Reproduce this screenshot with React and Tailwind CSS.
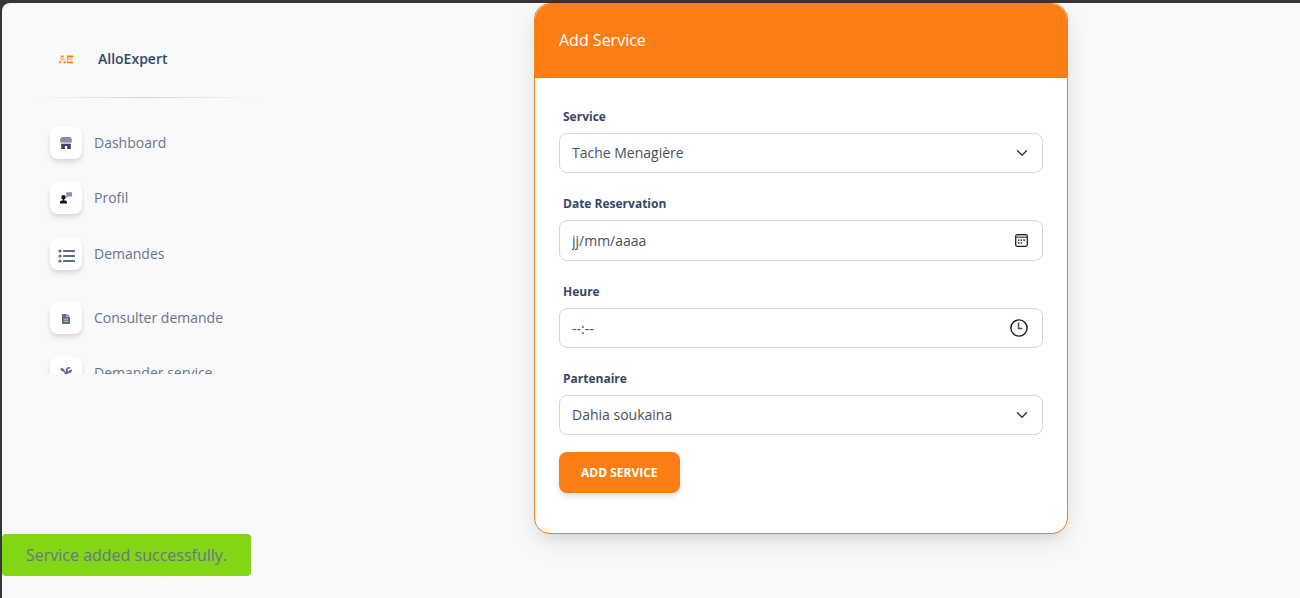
import React from "react";

function LogoMark() {
  return (
    <svg width="16" height="10" viewBox="0 0 16 10" fill="none" aria-hidden="true">
      <path d="M3 2.5H5.6" stroke="#fd7e14" strokeWidth="2" />
      <path d="M2.2 4.8H6.6" stroke="#fbb27c" strokeWidth="1.4" />
      <path d="M1.4 6.6H7.4" stroke="#fdd3b4" strokeWidth="1.4" />
      <path d="M1 8.3H3.2M5.6 8.3H7.8" stroke="#fd7e14" strokeWidth="1.8" />
      <path d="M9 2.5H15M9 8.3H15" stroke="#fd7e14" strokeWidth="1.8" />
      <path d="M9 5.4H14.4" stroke="#fbb27c" strokeWidth="1.4" />
      <path d="M9.4 2V9" stroke="#fd9a48" strokeWidth="1" />
    </svg>
  );
}

function ShopIcon() {
  return (
    <svg width="12" height="12" viewBox="0 0 12 12" aria-hidden="true">
      <path
        fill="#8a8fb0"
        d="M1.6 0H10.4L11.9 2.2V4.2A1.6 1.6 0 0 1 10.3 5.8Q9.5 5.8 8.9 5.2Q8.2 5.8 7.4 5.8Q6.6 5.8 6 5.2Q5.4 5.8 4.6 5.8Q3.8 5.8 3.1 5.2Q2.5 5.8 1.7 5.8A1.6 1.6 0 0 1 0.1 4.2V2.2Z"
      />
      <path
        fill="#3a416f"
        d="M1.2 6.7Q2.3 7 3.1 6.4Q4.6 7.2 6 6.4Q7.4 7.2 8.9 6.4Q9.7 7 10.8 6.7V12H7.2V9H4.9V12H1.2Z"
      />
    </svg>
  );
}

function ProfileIcon() {
  return (
    <svg width="12" height="12" viewBox="0 0 12 12" aria-hidden="true">
      <path fill="#8a8fb0" d="M6.3 0.2H12V4.6H8.3L6.3 6Z" />
      <circle cx="3.5" cy="5.2" r="2.2" fill="#141727" />
      <path fill="#141727" d="M2.8 7H4.2V8.4H5.4Q7 8.7 7 10.2V11.6H0V10.2Q0 8.7 1.6 8.4H2.8Z" />
    </svg>
  );
}

function ListIcon() {
  return (
    <svg width="17" height="14" viewBox="0 0 17 14" aria-hidden="true" className="translate-y-0.5">
      <g fill="#5b6b8a">
        <circle cx="2" cy="2" r="1.6" />
        <circle cx="2" cy="7" r="1.6" />
        <circle cx="2" cy="12" r="1.6" />
        <rect x="5" y="1" width="12" height="2" rx="0.6" />
        <rect x="5" y="6" width="12" height="2" rx="0.6" />
        <rect x="5" y="11" width="12" height="2" rx="0.6" />
      </g>
    </svg>
  );
}

function FileIcon() {
  return (
    <svg width="8" height="12" viewBox="0 0 8 12" aria-hidden="true">
      <path fill="#5b6b8a" d="M0.8 2H4.6V5H8V11.2Q8 12 7.2 12H0.8Q0 12 0 11.2V2.8Q0 2 0.8 2ZM5.3 2L8 4.5H5.3Z" />
      <path stroke="#d5dae3" strokeWidth="0.8" d="M1.8 7.2H6.2M1.8 9.3H6.2" />
    </svg>
  );
}

function ToolsIcon() {
  return (
    <svg width="12" height="12" viewBox="0 0 12 12" fill="none" stroke="#5b6b8a" aria-hidden="true">
      <path strokeWidth="2.4" d="M1 1.5L4 4" />
      <path strokeWidth="1.4" d="M4 4L7 7" />
      <path strokeWidth="2.6" strokeLinecap="round" d="M7.5 8L10 10.4" />
      <path strokeWidth="2.2" strokeLinecap="round" d="M2 10.4L7.2 5.6" />
      <path strokeWidth="1.8" d="M9.8 1.1A2.2 2.2 0 1 0 11 3.6L9.2 4" />
    </svg>
  );
}

function Chevron() {
  return (
    <svg
      width="12"
      height="12"
      viewBox="0 0 16 16"
      fill="none"
      stroke="#343a40"
      strokeWidth="2"
      strokeLinecap="round"
      strokeLinejoin="round"
      aria-hidden="true"
      className="pointer-events-none absolute right-[15px] top-1/2 -translate-y-1/2"
    >
      <path d="M2 5l6 6 6-6" />
    </svg>
  );
}

function CalendarIcon() {
  return (
    <svg width="13" height="13" viewBox="0 0 13 13" aria-hidden="true">
      <rect x="0.7" y="0.7" width="11.6" height="11.6" rx="1.5" fill="none" stroke="#222" strokeWidth="1.3" />
      <path d="M1 3.2H12" stroke="#222" strokeWidth="1" />
      <path d="M1.4 1.9H11.6" stroke="#999" strokeWidth="1" />
      <g fill="#222">
        <rect x="5.6" y="5.4" width="1.5" height="1.5" />
        <rect x="8.4" y="5.4" width="1.5" height="1.5" />
        <rect x="2.9" y="5.4" width="1.5" height="1.5" />
        <rect x="2.9" y="8.2" width="1.5" height="1.5" />
        <rect x="5.6" y="8.2" width="1.5" height="1.5" />
      </g>
    </svg>
  );
}

function ClockIcon() {
  return (
    <svg width="18" height="18" viewBox="0 0 18 18" fill="none" aria-hidden="true">
      <circle cx="9" cy="9" r="8.1" stroke="#1a1a1a" strokeWidth="1.4" />
      <path d="M8.5 3.6V9.5H12.4" stroke="#555" strokeWidth="1.5" />
    </svg>
  );
}

const links = [
  { label: "Dashboard", Icon: ShopIcon, space: "mb-[23px]" },
  { label: "Profil", Icon: ProfileIcon, space: "mb-6" },
  { label: "Demandes", Icon: ListIcon, space: "mb-8" },
  { label: "Consulter demande", Icon: FileIcon, space: "mb-[23px]" },
  { label: "Demander service", Icon: ToolsIcon, space: "" },
];

function Sidebar() {
  return (
    <aside className="w-[300px] shrink-0">
      <a href="#" className="flex items-center gap-6 pt-11 pl-14 text-sm leading-6 font-semibold text-[#344767]">
        <LogoMark />
        <span>AlloExpert</span>
      </a>
      <div className="mt-[26px] ml-7 h-px w-[230px] bg-linear-to-r from-transparent via-black/15 to-transparent" />
      <nav className="h-[276px] overflow-hidden pt-[29px] pl-12">
        <ul>
          {links.map(({ label, Icon, space }) => (
            <li key={label} className={space}>
              <a href="#" className="flex h-8 items-center gap-3 text-sm text-[#67748e]">
                <span className="flex size-8 items-center justify-center rounded-lg bg-white shadow-[0_4px_6px_-1px_rgba(20,20,20,0.12),0_2px_4px_-1px_rgba(20,20,20,0.07)]">
                  <Icon />
                </span>
                <span>{label}</span>
              </a>
            </li>
          ))}
        </ul>
      </nav>
    </aside>
  );
}

const control =
  "block w-full appearance-none rounded-lg border border-[#d2d6da] bg-white px-3 text-sm text-[#495057] placeholder:text-[#495057] placeholder:opacity-100 outline-none focus:border-[#fd7e14]";

function Field({ id, label, children }) {
  return (
    <div className="mb-[19px]">
      <label htmlFor={id} className="mb-1.5 ml-1 block pt-0.5 text-xs leading-5 font-bold text-[#344767]">
        {label}
      </label>
      <div className="relative">{children}</div>
    </div>
  );
}

function ServiceCard() {
  return (
    <section className="w-full max-w-[534px] self-start rounded-2xl border border-[#fd7e14] bg-white shadow-[0_8px_26px_-4px_rgba(20,20,20,0.15),0_8px_9px_-5px_rgba(20,20,20,0.06)]">
      <header className="rounded-t-2xl bg-[#fd7e14] px-6 pt-6 pb-[26px]">
        <h1 className="text-base text-white">Add Service</h1>
      </header>
      <form className="px-6 pt-[27px] pb-10" onSubmit={(e) => e.preventDefault()}>
        <Field id="service" label="Service">
          <select id="service" className={`${control} h-10`}>
            <option>Tache Menagière</option>
          </select>
          <Chevron />
        </Field>
        <Field id="date" label="Date Reservation">
          <input id="date" type="text" placeholder="jj/mm/aaaa" className={`${control} h-[41px]`} />
          <button type="button" aria-label="Choisir une date" className="absolute inset-y-0 right-[15px] flex items-center">
            <CalendarIcon />
          </button>
        </Field>
        <Field id="heure" label="Heure">
          <input id="heure" type="text" placeholder="--:--" className={`${control} h-10`} />
          <button type="button" aria-label="Choisir une heure" className="absolute inset-y-0 right-[15px] flex items-center">
            <ClockIcon />
          </button>
        </Field>
        <Field id="partenaire" label="Partenaire">
          <select id="partenaire" className={`${control} h-10`}>
            <option>Dahia soukaina</option>
          </select>
          <Chevron />
        </Field>
        <button
          type="submit"
          className="-mt-0.5 block h-[41px] rounded-lg bg-[#fd7e14] px-[22px] text-xs font-bold text-white uppercase shadow-[0_4px_7px_-1px_rgba(0,0,0,0.11),0_2px_4px_-1px_rgba(0,0,0,0.07)]"
        >
          Add Service
        </button>
      </form>
    </section>
  );
}

export default function App() {
  return (
    <div className="min-h-screen bg-[#363537] pt-[3px] pl-0.5 font-['Open_Sans',sans-serif]">
      <div className="flex min-h-[calc(100vh-3px)] rounded-tl-lg bg-[#f8f9fb]">
        <Sidebar />
        <main className="flex flex-1 justify-center">
          <ServiceCard />
        </main>
      </div>
      <div
        role="status"
        className="fixed bottom-[22px] left-0.5 rounded bg-[#82d616] px-6 py-[9px] text-base text-[#67748e]"
      >
        Service added successfully.
      </div>
    </div>
  );
}
